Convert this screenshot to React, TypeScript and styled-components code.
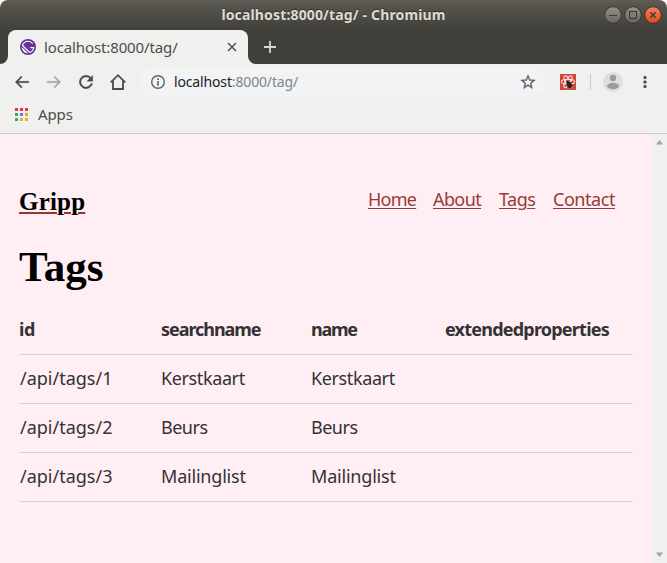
import React from "react";
import styled, { createGlobalStyle } from "styled-components";

const Global = createGlobalStyle`
  * { box-sizing: border-box; }
  body { margin: 0; background: #fff; overflow: hidden; }
`;

const Window = styled.div`
  width: 667px;
  height: 563px;
  display: flex;
  flex-direction: column;
  overflow: hidden;
  border-radius: 8px 8px 0 0;
  background: #f0f0ee;
  font-family: "Noto Sans", sans-serif;
`;

const TitleBar = styled.header`
  height: 30px;
  flex: none;
  display: grid;
  grid-template-columns: 1fr auto 1fr;
  align-items: center;
  background: linear-gradient(#54524a 0, #64625a 1px, #5a5850 2px, #403f3a 30px);
`;

const WindowTitle = styled.div`
  grid-column: 2;
  color: #dfdbd2;
  font-size: 14px;
  font-weight: 700;
  line-height: 30px;
  letter-spacing: 0.15px;
  white-space: pre;
  text-shadow: 0 -1px 1px #33322e;
`;

const WindowControls = styled.div`
  display: flex;
  justify-content: flex-end;
  gap: 2px;
  padding-right: 5px;
`;

const TabStrip = styled.div`
  height: 34px;
  flex: none;
  display: flex;
  align-items: flex-end;
  background: #403f3a;
`;

const TabFoot = styled.svg`
  width: 8px;
  height: 8px;
  flex: none;
`;

const Tab = styled.div`
  width: 240px;
  height: 34px;
  display: flex;
  align-items: center;
  padding: 0 10px 0 12px;
  border-radius: 8px 8px 0 0;
  background: #f0f0ee;
`;

const TabTitle = styled.div`
  flex: 1;
  padding-left: 8px;
  color: #4f4e4a;
  font-size: 15px;
  line-height: 34px;
  letter-spacing: -0.12px;
`;

const NewTab = styled.svg`
  width: 12px;
  height: 12px;
  margin: 0 0 11px 8px;
`;

const Toolbar = styled.div`
  height: 36px;
  flex: none;
  display: flex;
  align-items: center;
  padding: 0 12px 0 13px;
`;

const NavIcons = styled.div`
  display: flex;
  gap: 14px;
`;

const Omnibox = styled.div`
  width: 406px;
  height: 28px;
  display: flex;
  align-items: center;
  margin-left: 13px;
  padding: 0 9px 0 10px;
  border-radius: 14px;
  background: #f1f3f4;
`;

const Url = styled.div`
  flex: 1;
  padding-left: 8px;
  color: #202124;
  font-size: 14px;
  line-height: 28px;
  letter-spacing: -0.15px;
  span { color: #80868b; }
`;

const Extension = styled.svg`
  width: 16px;
  height: 16px;
  margin: 0 14px;
`;

const Divider = styled.div`
  width: 1px;
  height: 16px;
  background: #cbcbca;
`;

const Avatar = styled.svg`
  width: 20px;
  height: 20px;
  margin: 0 13px 0 12px;
`;

const Bookmarks = styled.div`
  height: 34px;
  flex: none;
  display: flex;
  align-items: center;
  gap: 10px;
  padding: 0 15px 4px;
  border-bottom: 1px solid #cbcbca;
  color: #4c4c4a;
  font-size: 15px;
  line-height: 20px;
  letter-spacing: -0.1px;
  span { padding-bottom: 2px; }
`;

const Viewport = styled.div`
  flex: 1;
  min-height: 0;
  display: flex;
`;

const Page = styled.main`
  width: 652px;
  padding: 48px 19px 0;
  background: #ffeef3;
`;

const Scrollbar = styled.div`
  width: 15px;
  display: flex;
  flex-direction: column;
  align-items: center;
  justify-content: space-between;
  padding: 6px 0;
  background: #f0f0f0;
`;

const SiteHeader = styled.div`
  height: 39px;
  display: flex;
  justify-content: space-between;
`;

const Brand = styled.a`
  color: #000;
  font: 700 25px/39px "Liberation Serif", serif;
  letter-spacing: 0.2px;
  text-decoration: underline #9a3434 2px;
  text-underline-offset: 2px;
`;

const Menu = styled.nav`
  display: flex;
  gap: 18px;
  padding-right: 18px;
`;

const MenuLink = styled.a<{ $spacing: number; $width: number }>`
  width: ${(p) => p.$width}px;
  color: #9a3a36;
  font-size: 18px;
  line-height: 34px;
  letter-spacing: ${(p) => p.$spacing}px;
  white-space: nowrap;
  text-decoration: underline 1px;
  text-underline-offset: 2px;
`;

const Heading = styled.h1`
  margin: 20px 0 0;
  height: 65px;
  color: #000;
  font: 700 43px/52px "Liberation Serif", serif;
`;

const Table = styled.table`
  width: 614px;
  table-layout: fixed;
  border-collapse: separate;
  border-spacing: 0;
  color: #333;
  font-size: 18px;
  line-height: 24px;
`;

const Cell = styled.td<{ $spacing: number; $indent?: number }>`
  height: 49px;
  padding: 0 0 2px ${(p) => p.$indent ?? 0}px;
  border-bottom: 1px solid #dfd0d5;
  text-align: left;
  letter-spacing: ${(p) => p.$spacing}px;
  white-space: nowrap;
`;

const columns = [
  { name: "id", width: 142, spacing: -0.5 },
  { name: "searchname", width: 150, spacing: -1.05 },
  { name: "name", width: 134, spacing: -1.3 },
  { name: "extendedproperties", width: 188, spacing: -0.78 },
];

const rows = [
  { id: "/api/tags/1", name: "Kerstkaart", spacing: -0.38 },
  { id: "/api/tags/2", name: "Beurs", spacing: -0.5 },
  { id: "/api/tags/3", name: "Mailinglist", spacing: -0.2 },
];

const links = [
  { label: "Home", width: 47, spacing: -0.75 },
  { label: "About", width: 48, spacing: -0.6 },
  { label: "Tags", width: 36, spacing: -0.5 },
  { label: "Contact", width: 62, spacing: -0.45 },
];

const WindowButton = ({ kind }: { kind: "min" | "max" | "close" }) => (
  <svg width="18" height="18" viewBox="0 0 18 18">
    <defs>
      <linearGradient id={`shade-${kind}`} x2="0" y2="1">
        <stop stopColor={kind === "close" ? "#f68560" : "#94928a"} />
        <stop offset="1" stopColor={kind === "close" ? "#de4818" : "#66645d"} />
      </linearGradient>
    </defs>
    <circle cx="9" cy="9" r="8.3" fill={`url(#shade-${kind})`} stroke="#393832" />
    <g fill="none" stroke="#3c3b36" strokeWidth="1.1">
      {kind === "min" && <path d="M5 9.5h8" />}
      {kind === "max" && <rect x="5.5" y="5.5" width="7" height="7" />}
      {kind === "close" && <path d="m6.3 6.3 5.4 5.4m0-5.400-5.4 5.4" strokeWidth="1.4" />}
    </g>
  </svg>
);

const Material = ({ d, color = "#4a4a48", weight = 0.4 }: { d: string; color?: string; weight?: number }) => (
  <svg width="18" height="18" viewBox="0 0 24 24" fill={color} stroke={color} strokeWidth={weight}>
    <path d={d} />
  </svg>
);

const GatsbyMark = () => (
  <svg width="16" height="16" viewBox="0 0 28 28">
    <circle cx="14" cy="14" r="14" fill="#639" />
    <path
      fill="#fff"
      d="M6.2 21.8C4.1 19.7 3 16.9 3 14.2L13.9 25c-2.8-.1-5.6-1.1-7.7-3.2m10.2 2.900L3.3 11.6C4.4 6.7 8.8 3 14 3c3.7 0 6.9 1.8 8.9 4.5l-1.5 1.3C19.7 6.5 17 5 14 5c-3.9 0-7.2 2.5-8.5 6L17 22.5c2.9-1 5.1-3.5 5.8-6.5H18v-2h7c0 5.2-3.7 9.6-8.6 10.7"
    />
  </svg>
);

const AppsGrid = () => (
  <svg width="13" height="13" viewBox="0 0 13 13" shapeRendering="crispEdges">
    {["#e8363a", "#e8363a", "#e8363a", "#43a35c", "#4c85f0", "#eaa81e", "#43a35c", "#eab01e", "#eab01e"].map((c, i) => (
      <rect key={i} x={(i % 3) * 5} y={Math.floor(i / 3) * 5} width="3" height="3" fill={c} />
    ))}
  </svg>
);

export default function App() {
  return (
    <Window>
      <Global />
      <TitleBar>
        <WindowTitle>localhost:8000/tag/ - Chromium</WindowTitle>
        <WindowControls>
          <WindowButton kind="min" />
          <WindowButton kind="max" />
          <WindowButton kind="close" />
        </WindowControls>
      </TitleBar>
      <TabStrip>
        <TabFoot viewBox="0 0 8 8"><path d="M8 0v8H0a8 8 0 0 0 8-8" fill="#f0f0ee" /></TabFoot>
        <Tab>
          <GatsbyMark />
          <TabTitle>localhost:8000/tag/</TabTitle>
          <svg width="12" height="12" viewBox="0 0 12 12"><path d="m2 2 8 8m0-8-8 8" stroke="#555552" strokeWidth="1.6" /></svg>
        </Tab>
        <TabFoot viewBox="0 0 8 8"><path d="M0 0v8h8a8 8 0 0 1-8-8" fill="#f0f0ee" /></TabFoot>
        <NewTab viewBox="0 0 12 12"><path d="M6 0v12M0 6h12" stroke="#d8d6cf" strokeWidth="1.8" /></NewTab>
      </TabStrip>
      <Toolbar>
        <NavIcons>
          <Material d="M21 11H6.83l5.58-5.59L11 4l-8 8 8 8 1.41-1.41L6.83 13H21z" />
          <Material color="#a5a5a3" d="M3 11h14.17l-5.58-5.59L13 4l8 8-8 8-1.41-1.41L17.17 13H3z" />
          <Material d="M18.4 5.6A9 9 0 1 0 20.8 14h-2.4a6.7 6.7 0 1 1-1.6-6.8L13.2 11H21V3z" />
          <svg width="18" height="18" viewBox="0 0 18 18" fill="none" stroke="#4a4a48" strokeWidth="1.8">
            <path d="M1.8 9.3 9 2.2l7.2 7.1M4 8v8h10V8" />
          </svg>
        </NavIcons>
        <Omnibox>
          <svg width="16" height="16" viewBox="0 0 16 16">
            <circle cx="8" cy="8" r="6.3" fill="none" stroke="#5f6368" strokeWidth="1.4" />
            <path d="M8 4.2v1.7M8 7.1v4.6" stroke="#5f6368" strokeWidth="1.6" />
          </svg>
          <Url>localhost<span>:8000/tag/</span></Url>
          <Material color="#5f6368" d="m22 9.24-7.19-.62L12 2 9.19 8.63 2 9.24l5.46 4.73L5.82 21 12 17.27 18.18 21l-1.63-7.03zM12 15.4l-3.76 2.27 1-4.28-3.32-2.88 4.38-.38L12 6.1l1.71 4.04 4.38.38-3.32 2.88 1 4.28z" />
        </Omnibox>
        <Extension viewBox="0 0 16 16">
          <rect width="16" height="16" fill="#d0453c" />
          <g fill="none" stroke="#f7e1df" strokeWidth="1.1">
            <ellipse cx="8" cy="7.8" rx="6.6" ry="2.6" />
            <ellipse cx="8" cy="7.8" rx="6.6" ry="2.6" transform="rotate(60 8 7.8)" />
            <ellipse cx="8" cy="7.8" rx="6.6" ry="2.6" transform="rotate(120 8 7.8)" />
          </g>
          <ellipse cx="9.5" cy="11" rx="2.5" ry="3.3" fill="#2b2020" transform="rotate(-30 9.5 11)" />
          <circle cx="7.5" cy="8" r="1.2" fill="#2b2020" />
          <path d="m6 11 6.500-3M7 13.500l6-2.500" stroke="#2b2020" strokeWidth=".8" />
        </Extension>
        <Divider />
        <Avatar viewBox="0 0 20 20">
          <circle cx="10" cy="10" r="10" fill="#dedede" />
          <circle cx="10" cy="6" r="3.2" fill="#9d9d9d" />
          <ellipse cx="10" cy="14" rx="6" ry="3.2" fill="#9d9d9d" />
        </Avatar>
        <Material d="M12 8a2 2 0 1 0 0-4 2 2 0 0 0 0 4m0 2a2 2 0 1 0 0 4 2 2 0 0 0 0-4m0 6a2 2 0 1 0 0 4 2 2 0 0 0 0-4" />
      </Toolbar>
      <Bookmarks><AppsGrid /><span>Apps</span></Bookmarks>
      <Viewport>
        <Page>
          <SiteHeader>
            <Brand>Gripp</Brand>
            <Menu>
              {links.map((l) => <MenuLink key={l.label} $width={l.width} $spacing={l.spacing}>{l.label}</MenuLink>)}
            </Menu>
          </SiteHeader>
          <Heading>Tags</Heading>
          <Table>
            <colgroup>{columns.map((c) => <col key={c.name} width={c.width} />)}</colgroup>
            <thead>
              <tr>{columns.map((c) => <Cell as="th" key={c.name} $spacing={c.spacing}>{c.name}</Cell>)}</tr>
            </thead>
            <tbody>
              {rows.map((r) => (
                <tr key={r.id}>
                  <Cell $spacing={0} $indent={1}>{r.id}</Cell>
                  <Cell $spacing={r.spacing}>{r.name}</Cell>
                  <Cell $spacing={r.spacing}>{r.name}</Cell>
                  <Cell $spacing={0} />
                </tr>
              ))}
            </tbody>
          </Table>
        </Page>
        <Scrollbar>
          <svg width="7" height="5"><path d="M0 4.500 3.500 0 7 4.500z" fill="#a3a3a3" /></svg>
          <svg width="7" height="5"><path d="M0 .5 3.500 5 7 .5z" fill="#a3a3a3" /></svg>
        </Scrollbar>
      </Viewport>
    </Window>
  );
}
